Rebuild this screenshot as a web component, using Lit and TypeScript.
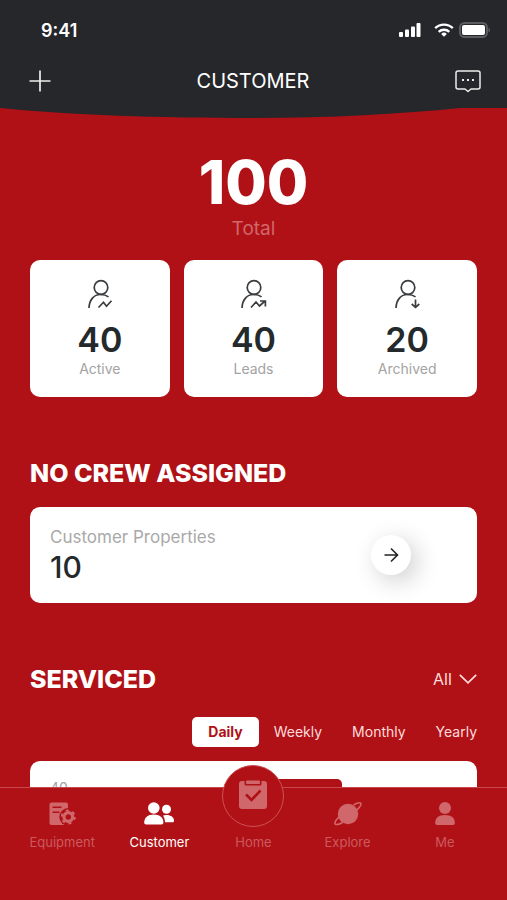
import { LitElement, html, svg, css, nothing } from "lit";
import { customElement, property, state } from "lit/decorators.js";
import { classMap } from "lit/directives/class-map.js";

const person = svg`
  <circle cx="15" cy="8.500" r="6.800" />
  <path d="M3 29C3.300 20.600 8.100 15.500 14.500 15.500c3.400 0 5.900.700 8 2.400" />`;

const glyphs: Record<string, unknown> = {
  active: svg`${person}<path d="M12.500 28.500l5-5.300 3 4 5-5.500" />`,
  leads: svg`${person}<path d="M12 28.500l5-5.500 3.500 4 5.500-5M21 22h5.400v5.400" />`,
  archived: svg`${person}<path d="M22.500 20.500v8M18.700 25l3.800 3.400 3.800-3.400" />`,
};

const navIcons: Record<string, unknown> = {
  equipment: html`<svg width="28" height="26" viewBox="0 0 28 26" fill="currentColor">
    <path fill-rule="evenodd" d="M3.500 1.500h14.500a2 2 0 0 1 2 2v20.500H3.500a2 2 0 0 1-2-2v-18.500a2 2 0 0 1 2-2zM4.500 5.500v1.500h9V5.500zM4.500 10.500v1.500h7V10.500z" />
    <circle class="cut" cx="20.300" cy="16" r="9" />
    <circle cx="20.300" cy="16" r="4.300" fill="none" stroke="currentColor" stroke-width="3.200" />
    <circle cx="20.300" cy="16" r="6.500" fill="none" stroke="currentColor" stroke-width="2" stroke-dasharray="3 3.807" />
  </svg>`,
  customer: html`<svg width="32" height="26" viewBox="0 0 32 26" fill="currentColor">
    <circle cx="10.800" cy="7" r="5.800" />
    <path d="M1.200 21.500c0-5 3.600-8 9.600-8s9.600 3 9.600 8c0 1.300-.7 2-2 2H3.200c-1.300 0-2-.7-2-2z" />
    <circle cx="23.500" cy="8.200" r="4.500" />
    <path d="M20 14.600c1-.4 2.200-.6 3.500-.6 4.500 0 7.500 2.300 7.500 5.700 0 1-.6 1.600-1.600 1.600H22c-.1-2.700-.8-4.900-2-6.700z" />
  </svg>`,
  home: html`<svg width="28" height="30" viewBox="0 0 28 30">
    <rect x="0" y="2" width="28" height="28" rx="3" fill="currentColor" />
    <rect class="cut" x="5.500" y="0" width="17" height="6.500" rx="1.500" />
    <rect x="7" y="1.500" width="14" height="3.500" rx="1" fill="currentColor" />
    <path class="tick" d="M7 15.500l5.500 5.500 9-9.500" />
  </svg>`,
  explore: html`<svg width="30" height="26" viewBox="0 0 30 26">
    <circle cx="15" cy="13" r="10.200" fill="currentColor" />
    <path d="M20.500 4c3.800-2.200 6.400-2.800 7.200-1.700.9 1.300-1 4-4.400 7.200M6.500 15.500C3 18.800 1.300 21.600 2.200 22.900c.8 1.100 3.700.5 7.400-1.500" fill="none" stroke="currentColor" stroke-width="1.700" />
  </svg>`,
  me: html`<svg width="22" height="26" viewBox="0 0 22 26" fill="currentColor">
    <circle cx="11" cy="7" r="6" />
    <path d="M1.200 22c0-5.200 3.300-8 9.800-8s9.800 2.800 9.800 8c0 1.300-.7 2-2 2H3.200c-1.300 0-2-.7-2-2z" />
  </svg>`,
};

@customElement("status-bar")
class StatusBar extends LitElement {
  static styles = css`
    :host { display: flex; align-items: center; justify-content: space-between; height: 60px; padding: 0 16px 0 41px; }
    .time { font-size: 18px; font-weight: 600; }
    .signals { display: flex; align-items: center; gap: 13px; }
    .power { margin-left: -8px; }
    svg { display: block; }
  `;
  render() {
    return html`
      <span class="time">9:41</span>
      <div class="signals">
        <svg width="22" height="14" viewBox="0 0 22 14" fill="#fff" aria-hidden="true">
          <rect x="0" y="9" width="4" height="5" rx="1" /><rect x="6" y="6.500" width="4" height="7.500" rx="1" />
          <rect x="12" y="3.500" width="4" height="10.500" rx="1" /><rect x="17.500" y="0" width="4" height="14" rx="1" />
        </svg>
        <svg width="20" height="14" viewBox="0 0 20 14" fill="none" stroke="#fff" stroke-width="2.400" aria-hidden="true">
          <path d="M1.200 5.200a12.600 12.600 0 0 1 17.600 0M4.700 8.900a7.600 7.600 0 0 1 10.600 0" />
          <path d="M10 13.800l-2.800-2.900a4.100 4.100 0 0 1 5.600 0z" fill="#fff" stroke="none" />
        </svg>
        <svg class="power" width="32" height="16" viewBox="0 0 32 16" aria-hidden="true">
          <rect x="1" y="1" width="27" height="14" rx="4.500" fill="none" stroke="#5b5c5f" stroke-width="2" />
          <rect x="3" y="3" width="23" height="10" rx="2" fill="#fff" />
          <path d="M29.500 5.500c2 .8 2 4.200 0 5z" fill="#5b5c5f" />
        </svg>
      </div>
    `;
  }
}

@customElement("stat-card")
class StatCard extends LitElement {
  @property() kind = "active";
  @property() label = "";
  @property({ type: Number }) value = 0;
  static styles = css`
    :host { display: flex; flex-direction: column; align-items: center; padding: 19px 0 20px; border-radius: 10px; background: #fff; }
    .glyph { display: block; fill: none; stroke: #3a3d40; stroke-width: 1.7; }
    .value { margin-top: 8px; font-size: 34px; line-height: 41px; font-weight: 600; color: #24292c; }
    .label { font-size: 14px; line-height: 17px; color: #a3a3a3; }
  `;
  render() {
    return html`
      <svg class="glyph" width="28" height="32" viewBox="0 0 28 32" aria-hidden="true">${glyphs[this.kind]}</svg>
      <span class="value">${this.value}</span>
      <span class="label">${this.label}</span>
    `;
  }
}

@customElement("bottom-nav")
class BottomNav extends LitElement {
  @state() private current = "customer";
  private items = [
    { id: "equipment", label: "Equipment" },
    { id: "customer", label: "Customer" },
    { id: "home", label: "Home" },
    { id: "explore", label: "Explore" },
    { id: "me", label: "Me" },
  ];
  static styles = css`
    :host { display: block; background: #b01116; border-top: 1px solid #c9484c; }
    .bar { display: grid; grid-template-columns: 16fr 15fr 15fr 15fr 16fr; height: 112px; padding: 0 12px; }
    .item { display: flex; flex-direction: column; align-items: center; align-self: start; padding-top: 12px; gap: 5px; color: #d0676b; font-size: 13px; line-height: 18px; text-decoration: none; }
    .label { color: #cb5a5e; }
    .on, .on .label { color: #fff; }
    .icon { display: flex; align-items: center; justify-content: center; height: 28px; }
    .icon svg { display: block; }
    .disc { box-sizing: border-box; width: 62px; height: 62px; margin: -35px 0 1px; border: 1px solid #cd5155; border-radius: 50%; background: #b01116; }
    .disc svg { margin-top: -4px; }
    .cut { fill: #b01116; }
    .tick { fill: none; stroke: #b01116; stroke-width: 2.6; }
  `;
  render() {
    return html`
      <nav class="bar" aria-label="Main">
        ${this.items.map(
          (item) => html`
            <a
              class=${classMap({ item: true, on: item.id === this.current })}
              href="#${item.id}"
              aria-current=${item.id === this.current ? "page" : nothing}
              @click=${() => (this.current = item.id)}
            >
              <span class=${classMap({ icon: true, disc: item.id === "home" })} aria-hidden="true">${navIcons[item.id]}</span>
              <span class="label">${item.label}</span>
            </a>
          `,
        )}
      </nav>
    `;
  }
}

@customElement("app-root")
class AppRoot extends LitElement {
  @state() private period = "Daily";
  static styles = css`
    :host { display: flex; flex-direction: column; height: 100vh; overflow: hidden; background: #b01116; color: #fff; font-family: Inter, "Liberation Sans", sans-serif; }
    button, select { font: inherit; color: inherit; background: none; border: 0; padding: 0; margin: 0; cursor: pointer; }
    svg { display: block; }
    .head { flex: none; background: #26272b; }
    .bar { display: flex; align-items: center; justify-content: space-between; height: 42px; padding: 0 26px 0 29px; }
    .title { margin: 0; font-size: 20px; line-height: 24px; font-weight: 400; }
    .line { fill: none; stroke: #eee; }
    .curve { width: 100%; height: 12px; margin-top: 4px; background: #b01116; }
    .content { flex: 1; min-height: 0; overflow-y: auto; scrollbar-width: none; padding: 29px 30px 0; }
    .total { display: flex; flex-direction: column; align-items: center; }
    .sum { font-size: 60px; line-height: 71px; font-weight: 800; }
    .caption { font-size: 19px; line-height: 22px; color: #d0676b; }
    .stats { display: grid; grid-template-columns: repeat(3, 1fr); gap: 14px; margin-top: 20px; }
    .heading { margin: 0; font-size: 25px; line-height: 30px; font-weight: 800; }
    .crew { margin-top: 61px; }
    .panel { display: flex; align-items: center; justify-content: space-between; margin-top: 19px; padding: 18px 66px 18px 20px; border-radius: 10px; background: #fff; }
    .name { font-size: 17px; line-height: 24px; color: #a9a9a9; }
    .count { font-size: 30px; line-height: 36px; font-weight: 500; color: #24292c; }
    .go { display: grid; place-items: center; width: 40px; height: 40px; border-radius: 50%; background: #fff; box-shadow: 6px 6px 24px rgba(0, 0, 0, 0.2); }
    .serviced { margin-top: 61px; }
    .row { display: flex; align-items: center; justify-content: space-between; }
    .filter { display: flex; align-items: center; gap: 6px; font-size: 16px; color: #ffdcdc; }
    .filter select { appearance: none; width: 20px; field-sizing: content; }
    .filter svg { pointer-events: none; }
    .tabs { display: flex; justify-content: flex-end; align-items: center; gap: 30px; margin-top: 23px; font-size: 14px; line-height: 30px; color: #ffdcdc; }
    .chosen { margin-right: -15px; padding: 0 16px; border-radius: 5px; background: #fff; color: #b01116; font-weight: 700; }
    .chart { display: grid; grid-template-columns: 48px 1fr; height: 220px; margin-top: 14px; padding: 18px 20px 0; box-sizing: border-box; border-radius: 10px; background: #fff; color: #a3a3a3; font-size: 14px; line-height: 18px; }
    .plot { padding-left: 172px; }
    .column { width: 72px; height: 180px; border-radius: 5px 5px 0 0; background: #b01116; }
    bottom-nav { flex: none; position: relative; }
  `;
  render() {
    return html`
      <header class="head">
        <status-bar></status-bar>
        <div class="bar">
          <button aria-label="Add customer">
            <svg width="22" height="22" viewBox="0 0 22 22" class="line" stroke-width="1.700"><path d="M11 .5v21M.5 11h21" /></svg>
          </button>
          <h1 class="title">CUSTOMER</h1>
          <button aria-label="Messages">
            <svg width="26" height="24" viewBox="0 0 26 24" class="line" stroke-width="1.500">
              <path d="M3 2h20a2 2 0 0 1 2 2v14a2 2 0 0 1-2 2h-7l-3 2.500-3-2.500H3a2 2 0 0 1-2-2V4a2 2 0 0 1 2-2z" stroke-linejoin="round" />
              <path d="M7 11h2M12 11h2M17 11h2" stroke-width="2" />
            </svg>
          </button>
        </div>
        <svg class="curve" viewBox="0 0 507 12" preserveAspectRatio="none" aria-hidden="true">
          <path d="M0 0H507V2H460C400 8 330 12 253 12C160 12 70 9 0 2Z" fill="#26272b" />
        </svg>
      </header>
      <main class="content">
        <div class="total">
          <span class="sum">100</span>
          <span class="caption">Total</span>
        </div>
        <div class="stats">
          <stat-card kind="active" value="40" label="Active"></stat-card>
          <stat-card kind="leads" value="40" label="Leads"></stat-card>
          <stat-card kind="archived" value="20" label="Archived"></stat-card>
        </div>
        <section class="crew">
          <h2 class="heading">NO CREW ASSIGNED</h2>
          <div class="panel">
            <div>
              <div class="name">Customer Properties</div>
              <div class="count">10</div>
            </div>
            <button class="go" aria-label="Open customer properties">
              <svg width="16" height="16" viewBox="0 0 16 16" fill="none" stroke="#222" stroke-width="1.600"><path d="M1.500 8h13M8 1.500L14.500 8 8 14.500" /></svg>
            </button>
          </div>
        </section>
        <section class="serviced">
          <div class="row">
            <h2 class="heading">SERVICED</h2>
            <label class="filter">
              <select aria-label="Serviced filter"><option>All</option></select>
              <svg width="18" height="10" viewBox="0 0 18 10" fill="none" stroke="currentColor" stroke-width="1.700" aria-hidden="true"><path d="M.8 .8L9 8.800 17.200.8" /></svg>
            </label>
          </div>
          <div class="tabs">
            ${["Daily", "Weekly", "Monthly", "Yearly"].map(
              (name) => html`<button
                class=${classMap({ chosen: name === this.period })}
                aria-pressed=${name === this.period}
                @click=${() => (this.period = name)}
              >${name}</button>`,
            )}
          </div>
          <div class="chart">
            <span>40</span>
            <div class="plot"><div class="column"></div></div>
          </div>
        </section>
      </main>
      <bottom-nav></bottom-nav>
    `;
  }
}
